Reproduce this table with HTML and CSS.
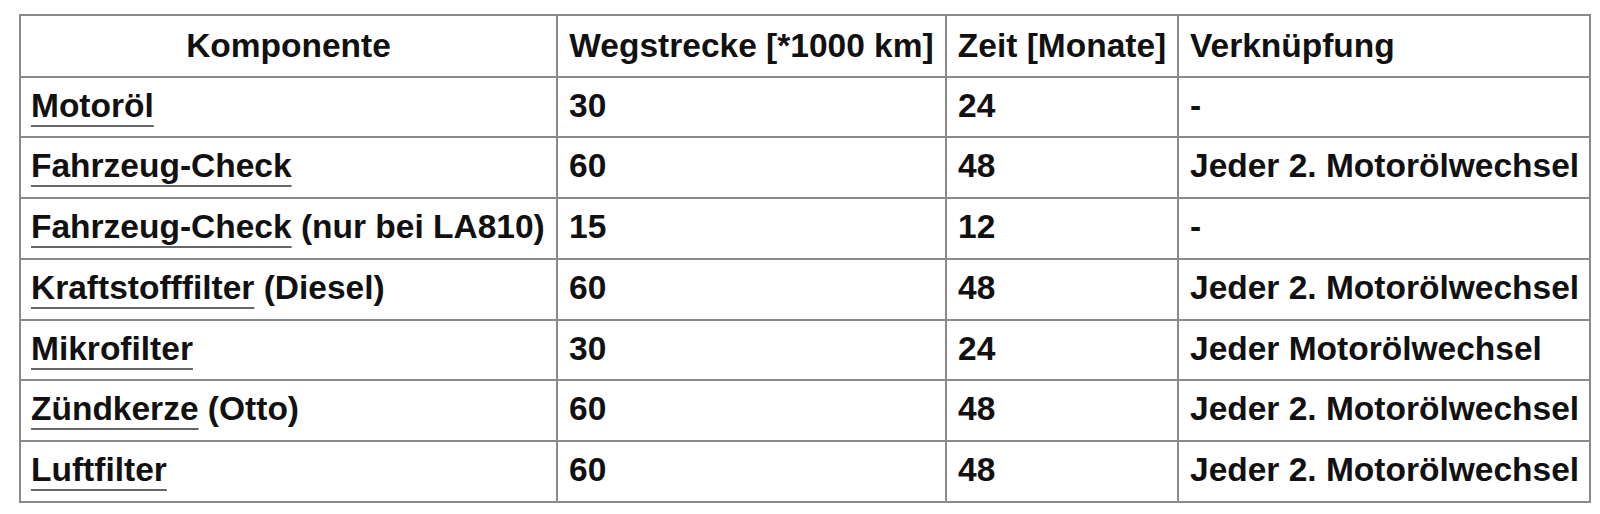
FILE: index.html
```html
<!DOCTYPE html>
<html lang="de">
<head>
<meta charset="utf-8">
<title>Wartungsintervalle</title>
<link rel="stylesheet" href="styles.css">
</head>
<body>
<table class="intervals">
  <colgroup>
    <col class="c1"><col class="c2"><col class="c3"><col class="c4">
  </colgroup>
  <thead>
    <tr>
      <th class="center">Komponente</th>
      <th class="center">Wegstrecke [*1000 km]</th>
      <th class="center">Zeit [Monate]</th>
      <th>Verknüpfung</th>
    </tr>
  </thead>
  <tbody>
    <tr><td><a href="#">Motoröl</a></td><td>30</td><td>24</td><td>-</td></tr>
    <tr><td><a href="#">Fahrzeug-Check</a></td><td>60</td><td>48</td><td>Jeder 2. Motorölwechsel</td></tr>
    <tr><td><a href="#">Fahrzeug-Check</a> (nur bei LA810)</td><td>15</td><td>12</td><td>-</td></tr>
    <tr><td><a href="#">Kraftstofffilter</a> (Diesel)</td><td>60</td><td>48</td><td>Jeder 2. Motorölwechsel</td></tr>
    <tr><td><a href="#">Mikrofilter</a></td><td>30</td><td>24</td><td>Jeder Motorölwechsel</td></tr>
    <tr><td><a href="#">Zündkerze</a> (Otto)</td><td>60</td><td>48</td><td>Jeder 2. Motorölwechsel</td></tr>
    <tr><td><a href="#">Luftfilter</a></td><td>60</td><td>48</td><td>Jeder 2. Motorölwechsel</td></tr>
  </tbody>
</table>
</body>
</html>
```
FILE: styles.css
```css
html, body {
  margin: 0;
  padding: 0;
  background: #ffffff;
}

body {
  font-family: "Liberation Sans", Arial, sans-serif;
  font-weight: bold;
  font-size: 33.5px;
  color: #111111;
}

.intervals {
  border-collapse: collapse;
  table-layout: fixed;
  width: 1572px;
  margin: 14px 0 0 19px;
  border: 2px solid #8a8a8a;
}

.intervals .c1 { width: 537px; }
.intervals .c2 { width: 389px; }
.intervals .c3 { width: 232px; }
.intervals .c4 { width: 412px; }

.intervals th,
.intervals td {
  border: 2px solid #8a8a8a;
  line-height: 37px;
  vertical-align: top;
  white-space: nowrap;
  text-align: left;
  padding: 0 0 0 11px;
}

.intervals th {
  height: 61.5px;
  padding-top: 11px;
  box-sizing: border-box;
  font-weight: bold;
}

.intervals th.center {
  text-align: center;
  padding-left: 0;
}

.intervals td {
  height: 60.8px;
  padding-top: 9px;
  box-sizing: border-box;
}

.intervals td:first-child {
  padding-left: 10px;
}

.intervals a {
  color: #111111;
  text-decoration: underline;
  text-decoration-color: #666666;
  text-decoration-thickness: 2px;
  text-underline-offset: 8px;
}
```
